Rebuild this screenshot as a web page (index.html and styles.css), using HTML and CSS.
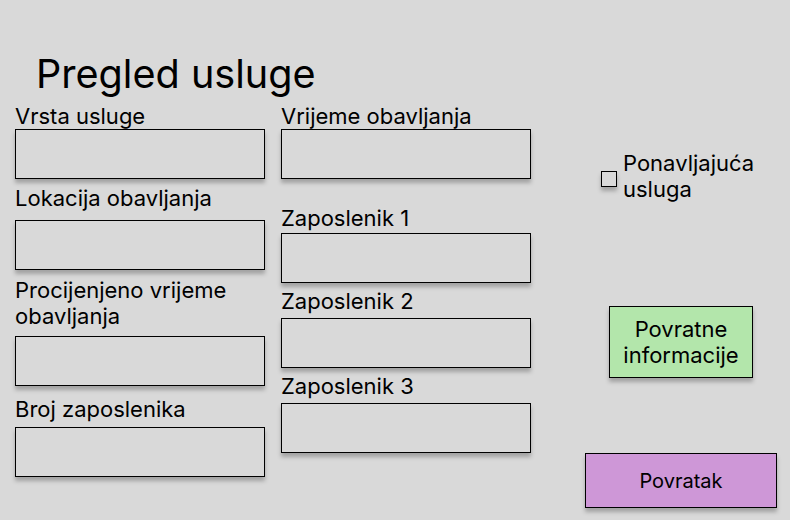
FILE: index.html
```html
<!DOCTYPE html>
<html lang="hr">
<head>
<meta charset="utf-8">
<title>Pregled usluge</title>
<link rel="stylesheet" href="styles.css">
</head>
<body>
<div class="page">
  <h1 class="title">Pregled usluge</h1>
  <div class="columns">
    <div class="col col-1">
      <div class="field f-a">
        <div class="label">Vrsta usluge</div>
        <div class="box"></div>
      </div>
      <div class="field f-b">
        <div class="label">Lokacija obavljanja</div>
        <div class="box"></div>
      </div>
      <div class="field f-c">
        <div class="label">Procijenjeno vrijeme obavljanja</div>
        <div class="box"></div>
      </div>
      <div class="field f-d">
        <div class="label">Broj zaposlenika</div>
        <div class="box"></div>
      </div>
    </div>
    <div class="col col-2">
      <div class="field f-a">
        <div class="label">Vrijeme obavljanja</div>
        <div class="box"></div>
      </div>
      <div class="field f-e">
        <div class="label">Zaposlenik 1</div>
        <div class="box"></div>
      </div>
      <div class="field f-f">
        <div class="label">Zaposlenik 2</div>
        <div class="box"></div>
      </div>
      <div class="field f-f">
        <div class="label">Zaposlenik 3</div>
        <div class="box"></div>
      </div>
    </div>
    <div class="col col-3">
      <label class="check">
        <span class="check-box"></span>
        <span class="check-text">Ponavljajuća<br>usluga</span>
      </label>
      <div class="btn btn-feedback">Povratne<br>informacije</div>
      <div class="btn btn-back">Povratak</div>
    </div>
  </div>
</div>
</body>
</html>
```

FILE: styles.css
```css
html, body {
  margin: 0;
  padding: 0;
  background: #d9d9d9;
}
body {
  font-family: Inter, "Noto Sans", sans-serif;
  color: #000;
  width: 790px;
  height: 520px;
  overflow: hidden;
}
.page {
  display: flex;
  flex-direction: column;
}
.title {
  margin: 50px 0 0 36px;
  font-size: 39.6px;
  font-weight: 400;
  line-height: 48px;
  height: 54px;
}
.columns {
  display: flex;
  align-items: flex-start;
}
.col {
  display: flex;
  flex-direction: column;
}
.col-1 {
  margin-left: 15px;
  width: 250px;
}
.col-2 {
  margin-left: 16px;
  width: 250px;
}
.label {
  font-size: 22px;
  line-height: 24px;
  white-space: nowrap;
}
.f-c .label {
  white-space: normal;
  line-height: 26px;
  margin-top: -1px;
  margin-bottom: 7px;
}
.box {
  box-sizing: border-box;
  height: 50px;
  border: 1px solid #000;
  background: #d9d9d9;
  box-shadow: 0 4px 4px rgba(0, 0, 0, 0.25);
  margin-top: 1px;
}
.f-b { margin-top: 7px; }
.f-b .box { margin-top: 10px; }
.f-c { margin-top: 8px; }
.f-d { margin-top: 11px; }
.f-d .box { margin-top: 6px; }
.f-e { margin-top: 27px; }
.f-e .box { margin-top: 3px; }
.f-f { margin-top: 6px; }
.f-f .box { margin-top: 5px; }

.col-3 {
  flex: 1;
  display: flex;
  flex-direction: column;
  align-items: flex-start;
}
.check {
  display: flex;
  align-items: flex-start;
  margin: 46px 0 0 70px;
}
.check-box {
  box-sizing: border-box;
  width: 16px;
  height: 16px;
  border: 1px solid #000;
  box-shadow: 0 4px 4px rgba(0, 0, 0, 0.25);
  margin: 21px 6px 0 0;
  flex: none;
}
.check-text {
  font-size: 22px;
  line-height: 26px;
}
.btn {
  box-sizing: border-box;
  border: 1px solid #000;
  box-shadow: 0 4px 4px rgba(0, 0, 0, 0.25);
  display: flex;
  align-items: center;
  justify-content: center;
  text-align: center;
}
.btn-feedback {
  width: 144px;
  height: 72px;
  margin: 104px 0 0 78px;
  background: #b3e6ab;
  font-size: 22px;
  line-height: 26px;
}
.btn-back {
  width: 192px;
  height: 55px;
  margin: 75px 0 0 54px;
  background: #ce97d7;
  font-size: 20px;
  line-height: 22px;
}
```
